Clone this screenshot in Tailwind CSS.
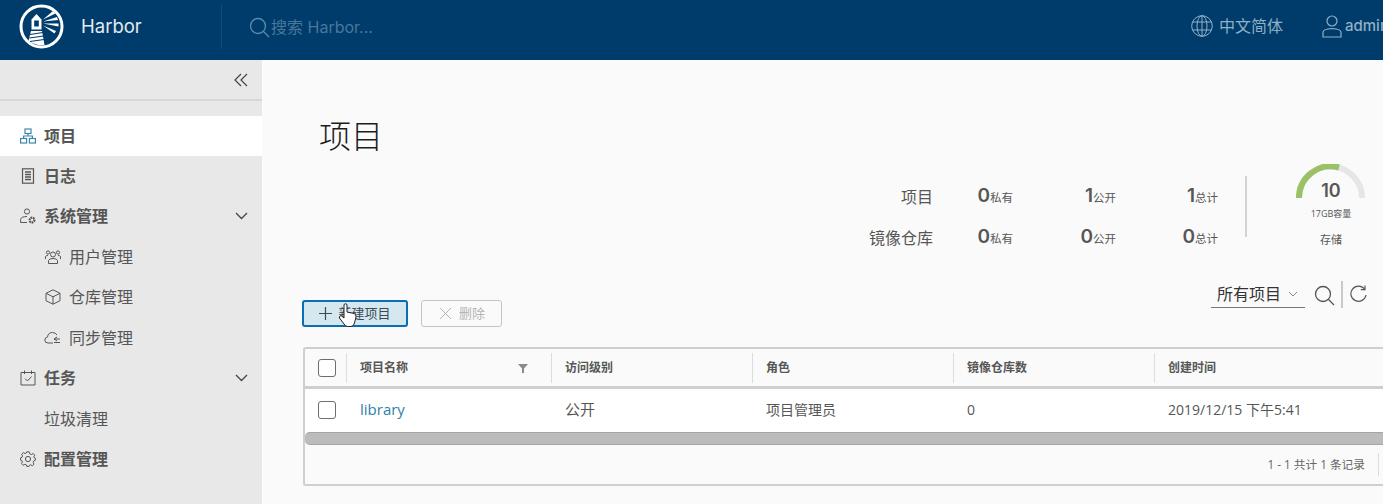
<!DOCTYPE html>
<html lang="zh-CN">
<head>
    <meta charset="UTF-8">
    <title>Harbor</title>
    <script src="https://cdn.jsdelivr.net/npm/@tailwindcss/browser@4"></script>
</head>
<body class="w-[1383px] h-[504px] overflow-hidden bg-[#fafafa] font-['Open_Sans','Noto_Sans_CJK_SC',sans-serif] text-[#565656]">
    <!-- Header -->
    <header class="flex items-center h-[60px] bg-[#003c6b] overflow-hidden">
        <svg class="ml-[19px] w-[45px] h-[45px] shrink-0 -mt-[8px]" viewBox="0 0 45 45">
            <circle cx="22.5" cy="22.5" r="20.5" fill="#003c6b" stroke="#fff" stroke-width="3"/>
            <path d="M12 27 H23 L25.5 41 Q17 42 9.5 37Z" fill="#fff"/>
            <path d="M12.5 25.5 V15.5 L17.5 10 L22.5 15.5 V25.5Z" fill="#fff"/>
            <rect x="15.2" y="16.5" width="4.6" height="6" fill="#003c6b"/>
            <path d="M11 30.5 L24 28.5 M10.5 34 L24.5 32 M11 37.5 L25 35.5" stroke="#003c6b" stroke-width="1.1"/>
            <path d="M24 15.5 L34 7 L36.5 9.5Z M24 17.5 L38 13 L39 16Z M24 19.5 L39.5 19.5 L39.5 22.5Z M24 21.5 L37 27 L35.5 29.5Z" fill="#fff"/>
        </svg>
        <span class="ml-[17px] w-[141px] shrink-0 text-[18.5px] text-[#e4ebef] font-['Inter','Noto_Sans_CJK_SC',sans-serif] -mt-[6px]">Harbor</span>
        <div class="w-px shrink-0 h-[44px] bg-[#0c4f7e] ml-[-1px] -mt-[7px]"></div>
        <div class="ml-[27px] flex items-center shrink-0 -mt-[6px]">
            <svg class="w-[21px] h-[21px]" viewBox="0 0 21 21" fill="none" stroke="#5b8cae" stroke-width="1.3"><circle cx="9" cy="9" r="7.5"/><path d="M14.5 14.5 L20 20"/></svg>
            <span class="text-[16px] text-[#47789c] font-['Inter','Noto_Sans_CJK_SC',sans-serif] ml-[1px] w-[200px]">搜索 Harbor...</span>
        </div>
        <div class="ml-[720px] flex items-center -mt-[8px] shrink-0">
            <svg class="w-[22px] h-[22px]" viewBox="0 0 22 22" fill="none" stroke="#8fb0c7" stroke-width="1"><circle cx="11" cy="11" r="10.3"/><ellipse cx="11" cy="11" rx="5" ry="10.3"/><path d="M11 .7 V21.3 M1.5 7 H20.5 M1.5 15 H20.5"/></svg>
            <span class="ml-[6px] text-[16px] text-[#8fb0c7] w-[67px]">中文简体</span>
            <svg class="ml-[36px] w-[20px] h-[23px]" viewBox="0 0 20 23" fill="none" stroke="#8fb0c7" stroke-width="1.2"><circle cx="10" cy="6" r="5"/><path d="M1 22 V17.5 Q1 14 10 13.5 Q19 14 19 17.5 V22Z"/></svg>
            <span class="ml-[3px] text-[15px] font-medium text-[#8fb0c7] font-['Inter',sans-serif]">admin</span>
        </div>
    </header>

    <div class="flex h-[444px]">
        <!-- Sidebar -->
        <aside class="w-[262px] shrink-0 bg-[#e8e8e8] text-[16px]">
            <div class="flex items-center justify-end h-[41px] pr-[14px] border-b-2 border-[#d7d7d7]">
                <svg class="w-[14px] h-[14px]" viewBox="0 0 14 14" fill="none" stroke="#444" stroke-width="1.2"><path d="M7 1 L1 7 L7 13 M13 1 L7 7 L13 13"/></svg>
            </div>
            <nav class="pt-[15px]">
                <a class="flex items-center h-[40px] pl-[20px] bg-white font-bold text-[#565656]">
                    <svg class="w-[16px] h-[16px] mr-[8px]" viewBox="0 0 16 16" fill="none" stroke="#3f86ad" stroke-width="1.2"><rect x="5" y="1" width="6" height="4.5"/><rect x=".6" y="10.5" width="6" height="4.5"/><rect x="9.4" y="10.5" width="6" height="4.5"/><path d="M8 5.5 V8 M3.6 10.5 V8 H12.4 V10.5"/></svg>项目
                </a>
                <a class="flex items-center h-[40px] pl-[20px] font-bold">
                    <svg class="w-[16px] h-[16px] mr-[8px]" viewBox="0 0 16 16" fill="none" stroke="#565656" stroke-width="1.2"><rect x="2.5" y=".8" width="11" height="14.4"/><path d="M5 4 H11 M5 6.5 H11 M5 9 H11 M5 11.5 H11" stroke-width="1.4"/></svg>日志
                </a>
                <a class="flex items-center h-[40px] pl-[20px] font-bold">
                    <svg class="w-[16px] h-[16px] mr-[8px]" viewBox="0 0 16 16" fill="none" stroke="#565656" stroke-width="1"><circle cx="7" cy="3.5" r="2.6"/><path d="M.6 14.5 V11.5 Q1 8.6 7 8.5 M.6 14.5 H7"/><circle cx="12" cy="12" r="2.4" stroke-width="2.2" stroke-dasharray="1.6 .6"/></svg>系统管理
                    <svg class="ml-auto mr-[14px] w-[13px] h-[8px]" viewBox="0 0 13 8" fill="none" stroke="#444" stroke-width="1.3"><path d="M1 1 L6.5 6.5 L12 1"/></svg>
                </a>
                <a class="flex items-center h-[41px] pl-[45px]">
                    <svg class="w-[16px] h-[16px] mr-[8px]" viewBox="0 0 16 16" fill="none" stroke="#565656" stroke-width="1"><circle cx="8" cy="5.5" r="2.5"/><path d="M3.5 14.5 V11.5 Q4 9.5 8 9.5 Q12 9.5 12.5 11.5 V14.5Z"/><circle cx="3" cy="3.5" r="1.6"/><circle cx="13" cy="3.5" r="1.6"/><path d="M.5 10 V7.5 Q1 6.5 3 6.5 M15.5 10 V7.5 Q15 6.5 13 6.5"/></svg>用户管理
                </a>
                <a class="flex items-center h-[40px] pl-[45px]">
                    <svg class="w-[16px] h-[16px] mr-[8px]" viewBox="0 0 16 16" fill="none" stroke="#565656" stroke-width="1"><path d="M8 .8 L15 4.3 V11.7 L8 15.2 L1 11.7 V4.3Z M1 4.3 L8 7.8 L15 4.3 M8 7.8 V15.2"/></svg>仓库管理
                </a>
                <a class="flex items-center h-[41px] pl-[44px]">
                    <svg class="w-[17px] h-[16px] mr-[8px]" viewBox="0 0 17 16" fill="none" stroke="#565656" stroke-width="1"><path d="M9 13 H4 Q.8 13 .8 10 Q.8 7.5 3.5 7 Q4 2.5 8.5 2.5 Q11.5 2.5 13 5"/><path d="M10 9 H16 M13 7 L10 9 L13 11 M10 12.5 H16"/></svg>同步管理
                </a>
                <a class="flex items-center h-[40px] pl-[20px] font-bold">
                    <svg class="w-[16px] h-[16px] mr-[8px]" viewBox="0 0 16 16" fill="none" stroke="#565656" stroke-width="1"><path d="M1 2.5 H15 V15 H1Z M4.5 .5 V4 M11.5 .5 V4"/><path d="M5 8.5 L7.5 11 L11.5 6.5"/></svg>任务
                    <svg class="ml-auto mr-[14px] w-[13px] h-[8px]" viewBox="0 0 13 8" fill="none" stroke="#444" stroke-width="1.3"><path d="M1 1 L6.5 6.5 L12 1"/></svg>
                </a>
                <a class="flex items-center h-[41px] pl-[44px]">垃圾清理</a>
                <a class="flex items-center h-[40px] pl-[20px] font-bold">
                    <svg class="w-[16px] h-[16px] mr-[8px]" viewBox="0 0 16 16" fill="none" stroke="#565656" stroke-width="1"><circle cx="8" cy="8" r="2.6"/><path d="M6.8 .8 H9.2 L9.7 2.8 L11.4 3.5 L13.2 2.5 L14.8 4.2 L13.7 5.9 L14.4 7 L15.4 7.2 V9.2 L13.9 9.8 L13.2 11.4 L14 13.2 L12.3 14.8 L10.6 13.8 L9.4 14.3 L9 15.4 H6.8 L6.3 13.9 L4.8 13.3 L3.1 14.3 L1.5 12.7 L2.4 11 L1.8 9.6 L.6 9.2 V6.9 L2 6.3 L2.6 4.9 L1.6 3.2 L3.3 1.6 L5 2.5 L6.3 2Z"/></svg>配置管理
                </a>
            </nav>
        </aside>

        <!-- Main -->
        <main class="relative flex-1 min-w-0 pl-[40px] overflow-hidden">
            <h1 class="mt-[56px] ml-[17px] text-[32px] leading-[40px] font-light text-[#1c1c1c]">项目</h1>

            <!-- Stats -->
            <div class="flex h-[95px] -mt-[1px] text-[#565656]">
                <div class="ml-[526px] w-[393px] grid grid-cols-[105px_80px_103px_102px] grid-rows-[41px_41px] pt-[1px] mt-[20px] items-center text-[16px]">
                    <span class="text-right">项目</span>
                    <span class="text-right text-[11.5px]"><b class="font-['Inter'] text-[19px] font-semibold">0</b>私有</span>
                    <span class="text-right text-[11.5px]"><b class="font-['Inter'] text-[19px] font-semibold">1</b>公开</span>
                    <span class="text-right text-[11.5px]"><b class="font-['Inter'] text-[19px] font-semibold">1</b>总计</span>
                    <span class="text-right">镜像仓库</span>
                    <span class="text-right text-[11.5px]"><b class="font-['Inter'] text-[19px] font-semibold">0</b>私有</span>
                    <span class="text-right text-[11.5px]"><b class="font-['Inter'] text-[19px] font-semibold">0</b>公开</span>
                    <span class="text-right text-[11.5px]"><b class="font-['Inter'] text-[19px] font-semibold">0</b>总计</span>
                </div>
                <div class="ml-[24px] mt-[21px] w-[2px] h-[61px] bg-[#d2d2d2]"></div>
                <div class="ml-[49px] w-[70px] mt-[9px] flex flex-col items-center shrink-0">
                    <div class="relative w-[70px] h-[36px]">
                        <svg class="w-[70px] h-[36px]" viewBox="0 0 70 36" fill="none" stroke-width="6"><path d="M3 34 A31.5 31.5 0 0 1 66 34" stroke="#e6e6e6"/><path d="M3 34 A31.5 31.5 0 0 1 43 3.5" stroke="#9bc167"/></svg>
                        <span class="absolute left-0 right-0 top-[15px] text-center font-['Inter'] text-[18px] leading-[24px] font-semibold">10</span>
                    </div>
                    <span class="mt-[8px] text-[9px] leading-[12px]">17GB容量</span>
                    <span class="mt-[13px] text-[11px] leading-[14px]">存储</span>
                </div>
            </div>

            <!-- Toolbar -->
            <div class="flex h-[65px] mt-[29px]">
                <button class="relative flex items-center justify-center mt-[21px] w-[106px] h-[27px] border-2 border-[#0a6eb5] rounded-[3px] bg-[#d5e8f0] text-[13px] text-[#3a4a52]">
                    <svg class="w-[13px] h-[13px] mr-[6px]" viewBox="0 0 13 13" stroke="#3a4a52" stroke-width="1.2"><path d="M6.5 0 V13 M0 6.5 H13"/></svg>
                    新建项目
                    <svg class="absolute left-[34px] top-[1px] w-[20px] h-[25px]" viewBox="0 0 20 25"><path d="M6 1.5 Q7.5 0 9 1.5 V9 L16 10.5 Q18.5 11.5 18 14 L16.5 20 Q15.5 23.5 13 23.5 H9.5 Q7.5 23.5 6 21 L1.5 15 Q1 13 3 12.5 L6 15Z" fill="#fff" stroke="#222" stroke-width="1"/></svg>
                </button>
                <button class="flex items-center justify-center ml-[13px] mt-[21px] pl-[2px] w-[81px] h-[27px] border border-[#c4c4c4] rounded-[3px] text-[13px] text-[#b5b5b5]">
                    <svg class="w-[11px] h-[11px] mr-[8px]" viewBox="0 0 11 11" stroke="#b5b5b5" stroke-width="1"><path d="M0 0 L11 11 M11 0 L0 11"/></svg>
                    删除
                </button>
                <div class="ml-[709px] flex items-start shrink-0">
                    <div class="flex items-center w-[94px] h-[27px] pl-[6px] mt-[2px] border-b border-[#777] text-[16px] text-[#333]">所有项目
                        <svg class="ml-[7px] w-[10px] h-[6px]" viewBox="0 0 10 6" fill="none" stroke="#888" stroke-width="1"><path d="M1 1 L5 5 L9 1"/></svg>
                    </div>
                    <svg class="ml-[9px] mt-[6px] w-[21px] h-[21px]" viewBox="0 0 21 21" fill="none" stroke="#555" stroke-width="1.3"><circle cx="9" cy="9" r="7.5"/><path d="M14.5 14.5 L20 20"/></svg>
                    <div class="ml-[6px] mt-[2px] w-[2px] h-[27px] bg-[#c8c8c8]"></div>
                    <svg class="ml-[7px] mt-[6px] w-[17px] h-[18px]" viewBox="0 0 17 18" fill="none" stroke="#555" stroke-width="1.2"><path d="M14.5 4 A7.6 7.6 0 1 0 16 10"/><path d="M15 .5 V4.7 H10.8"/></svg>
                </div>
            </div>

            <!-- Table -->
            <div class="ml-[1px] mt-[3px] w-[1120px] h-[139px] border-2 border-[#cfcfcf] rounded-[3px]">
                <div class="flex h-[40px] items-center border-b-[3px] border-[#cfcfcf] text-[12px] font-bold text-[#565656]">
                    <div class="w-[42px] h-[30px] pl-[2px] flex items-center justify-center border-r border-[#ddd]">
                        <span class="block w-[18px] h-[18px] border border-[#6d6d6d] rounded-[3px] bg-white"></span>
                    </div>
                    <div class="w-[205px] h-[30px] flex items-center pl-[13px] pr-[23px] border-r border-[#ddd]">项目名称
                        <svg class="ml-auto w-[10px] h-[10px]" viewBox="0 0 10 10" fill="#8a8a8a"><path d="M0 1 H10 L6 5.5 V10 H4 V5.5Z"/></svg>
                    </div>
                    <div class="w-[201px] h-[30px] flex items-center pl-[13px] border-r border-[#ddd]">访问级别</div>
                    <div class="w-[201px] h-[30px] flex items-center pl-[13px] border-r border-[#ddd]">角色</div>
                    <div class="w-[201px] h-[30px] flex items-center pl-[13px] border-r border-[#ddd]">镜像仓库数</div>
                    <div class="flex-1 h-[30px] flex items-center pl-[13px]">创建时间</div>
                </div>
                <div class="flex h-[43px] pb-[2px] items-center bg-white text-[14px] text-[#565656]">
                    <div class="w-[42px] pl-[2px] flex justify-center">
                        <span class="block w-[18px] h-[18px] border border-[#6d6d6d] rounded-[3px] bg-white"></span>
                    </div>
                    <div class="w-[205px] pl-[13px] text-[15px] text-[#2f7fa8]">library</div>
                    <div class="w-[201px] pl-[13px] text-[15px]">公开</div>
                    <div class="w-[201px] pl-[13px]">项目管理员</div>
                    <div class="w-[201px] pl-[13px]">0</div>
                    <div class="pl-[13px]">2019/12/15 下午5:41</div>
                </div>
                <div class="h-[13px] bg-[#bcbcbc] border-y border-[#a5a5a5] rounded-l-[5px]"></div>
                <div class="flex items-center h-[39px]">
                    <div class="flex items-center justify-end w-[1074px] h-[23px] pr-[13px] border-r border-[#ddd] text-[11.7px] text-[#666]">1 - 1 共计 1 条记录</div>
                </div>
            </div>
        </main>
    </div>
</body>
</html>
